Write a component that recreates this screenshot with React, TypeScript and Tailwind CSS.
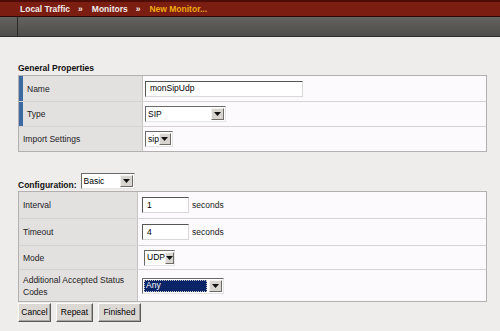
import React from 'react'

const font = { fontFamily: '"Liberation Sans", Arial, sans-serif' }

const Arrow = () => (
  <span className="flex h-[12px] w-[13px] items-center justify-center border border-t-[#f4f2f0] border-l-[#f4f2f0] border-r-[#6e6a68] border-b-[#6e6a68] bg-[#d8d4d0]">
    <svg width="7" height="4" viewBox="0 0 7 4">
      <path d="M0 0h7L3.5 4z" fill="#111" />
    </svg>
  </span>
)

const Select = ({
  value,
  width,
  selected = false,
}: {
  value: string
  width: number
  selected?: boolean
}) => (
  <div
    className="flex h-[16px] items-center justify-between border border-t-[#6a6a6a] border-l-[#6a6a6a] border-r-[#e4e4e4] border-b-[#e4e4e4] bg-white pr-[1px] text-[8.5px] text-black"
    style={{ width }}
  >
    {selected ? (
      <span className="ml-[1px] mr-[2px] flex h-[12px] flex-1 items-center border border-dotted border-[#c8c8c8] bg-[#0b2468] pl-[1px] text-white">
        {value}
      </span>
    ) : (
      <span className="pl-[2px]">{value}</span>
    )}
    <Arrow />
  </div>
)

const TextInput = ({ value, width }: { value: string; width: number }) => (
  <div
    className="flex h-[16px] items-center border border-t-[#555] border-l-[#555] border-r-[#d8d8d8] border-b-[#d8d8d8] bg-white pl-[4px] text-[8.5px] text-black"
    style={{ width }}
  >
    {value}
  </div>
)

const Row = ({
  label,
  labelWidth,
  height,
  marked = false,
  last = false,
  children,
}: {
  label: React.ReactNode
  labelWidth: number
  height: number
  marked?: boolean
  last?: boolean
  children: React.ReactNode
}) => (
  <div
    className={`flex ${last ? '' : 'border-b border-[#d6d2d2]'}`}
    style={{ height }}
  >
    <div
      className={`flex shrink-0 items-center border-r border-[#c6c2c2] bg-[#e3e0e0] pl-[4px] text-[8.5px] leading-[12px] text-[#222] ${
        marked ? 'border-l-[4px] border-l-[#3b6aa3]' : ''
      }`}
      style={{ width: labelWidth }}
    >
      {label}
    </div>
    <div className="flex flex-1 items-center gap-[3px] bg-[#fcfafc] pl-[2px]">{children}</div>
  </div>
)

const Button = ({ label, width }: { label: string; width: number }) => (
  <div
    className="flex h-[19px] items-center justify-center border border-t-[#fafafa] border-l-[#fafafa] border-r-[#5a5858] border-b-[#5a5858] bg-[#dcd8d4] text-[8.5px] text-black shadow-[inset_-1px_-1px_0_#a8a4a0]"
    style={{ width }}
  >
    {label}
  </div>
)

export default function App() {
  return (
    <div className="h-[331px] w-[500px] overflow-hidden bg-[#efecec]" style={font}>
      {/* breadcrumb */}
      <div className="flex h-[17px] items-center border-t-2 border-b border-t-[#4e0c06] border-b-[#2e0804] bg-[#7c1d12] pl-[20px] text-[8.5px] font-bold text-[#f2ecea]">
        <span>Local Traffic</span>
        <span className="ml-[8px]">»</span>
        <span className="ml-[9px]">Monitors</span>
        <span className="ml-[8px]">»</span>
        <span className="ml-[9px] text-[#f0aa10]">New Monitor...</span>
      </div>
      {/* tab strip */}
      <div className="flex h-[20px] border-b border-[#2c2c2a] bg-gradient-to-b from-[#65635f] to-[#4f4d4b]">
        <div className="w-[18px] border-r border-[#2a2a28]" />
      </div>

      <div className="pl-[18px] pr-[13px] pt-[24px]">
        <div className="text-[8.5px] font-bold leading-[14px] text-[#111]">General Properties</div>
        <div className="border border-[#b4b0b0]">
          <Row label="Name" labelWidth={124} height={26} marked>
            <TextInput value="monSipUdp" width={158} />
          </Row>
          <Row label="Type" labelWidth={124} height={25} marked>
            <Select value="SIP" width={81} />
          </Row>
          <Row label="Import Settings" labelWidth={124} height={24} last>
            <Select value="sip" width={28} />
          </Row>
        </div>

        <div className="mt-[21px] flex h-[18px] items-start">
          <span className="mt-[6px] text-[8.5px] font-bold text-[#111]">Configuration:</span>
          <div className="ml-[4px]">
            <Select value="Basic" width={54} />
          </div>
        </div>
        <div className="border border-[#b4b0b0]">
          <Row label="Interval" labelWidth={119} height={27}>
            <div className="pl-[2px]">
              <TextInput value="1" width={47} />
            </div>
            <span className="text-[8.5px] text-[#222]">seconds</span>
          </Row>
          <Row label="Timeout" labelWidth={119} height={27}>
            <div className="pl-[2px]">
              <TextInput value="4" width={47} />
            </div>
            <span className="text-[8.5px] text-[#222]">seconds</span>
          </Row>
          <Row label="Mode" labelWidth={119} height={24}>
            <div className="pl-[4px]">
              <Select value="UDP" width={31} />
            </div>
          </Row>
          <Row
            label={
              <span>
                Additional Accepted Status
                <br />
                Codes
              </span>
            }
            labelWidth={119}
            height={31}
            last
          >
            <div className="pl-[2px]">
              <Select value="Any" width={82} selected />
            </div>
          </Row>
        </div>

        <div className="mt-[1px] flex gap-[5px]">
          <Button label="Cancel" width={33} />
          <Button label="Repeat" width={37} />
          <Button label="Finished" width={43} />
        </div>
      </div>
    </div>
  )
}
